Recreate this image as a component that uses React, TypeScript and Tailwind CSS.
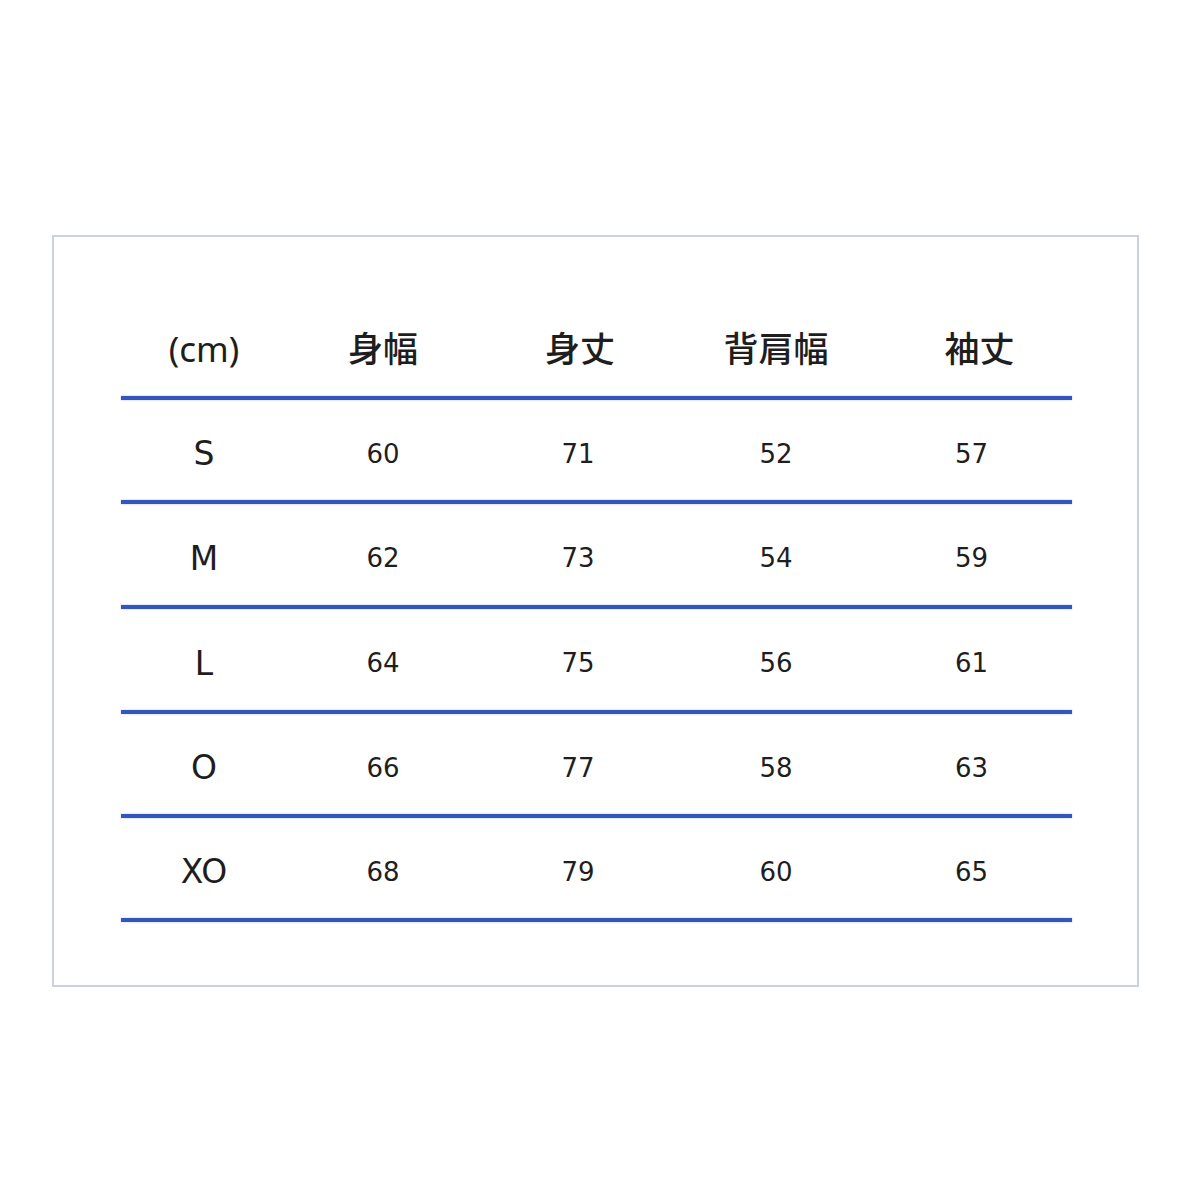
import React from "react";

const cols = "grid grid-cols-[166px_192px_202px_190px_201px] items-center";
const rows: [string, string, string, string, string][] = [
  ["S", "60", "71", "52", "57"],
  ["M", "62", "73", "54", "59"],
  ["L", "64", "75", "56", "61"],
  ["O", "66", "77", "58", "63"],
  ["XO", "68", "79", "60", "65"],
];
const heights = ["h-[100px]", "h-[101px]", "h-[101px]", "h-[100px]", "h-[100px]"];

function Line() {
  return <div className="h-[4px] w-full bg-[#3356bd] shadow-[0_0_2px_rgba(80,120,220,0.5)]" />;
}

const latin = { fontFamily: '"DejaVu Sans", "Noto Sans", sans-serif' };

export default function App() {
  return (
    <div
      className="w-[1200px] h-[1200px] bg-white pt-[235px] pl-[52px] text-[#1e1e1e]"
      style={{ fontFamily: '"Noto Sans", "Noto Sans CJK JP", sans-serif' }}
    >
      <div className="w-[1087px] h-[752px] border-2 border-[#cbd0e2] pt-[61px] pl-[67px]">
        <div className="w-[951px]">
          <div className={`${cols} h-[98px] text-[35px] text-center pt-[4px]`}>
            <div className="text-[35px]">(cm)</div>
            <div className="font-medium">身幅</div>
            <div className="font-medium">身丈</div>
            <div className="font-medium">背肩幅</div>
            <div className="font-medium pl-[16px]">袖丈</div>
          </div>
          <Line />
          {rows.map((r, i) => (
            <div key={r[0]}>
              <div className={`${cols} ${heights[i]} text-center pt-[8px]`} style={latin}>
                <div className="text-[33px]">{r[0]}</div>
                <div className="text-[26px]">{r[1]}</div>
                <div className="text-[26px] pr-[4px]">{r[2]}</div>
                <div className="text-[26px]">{r[3]}</div>
                <div className="text-[26px]">{r[4]}</div>
              </div>
              <Line />
            </div>
          ))}
        </div>
      </div>
    </div>
  );
}
